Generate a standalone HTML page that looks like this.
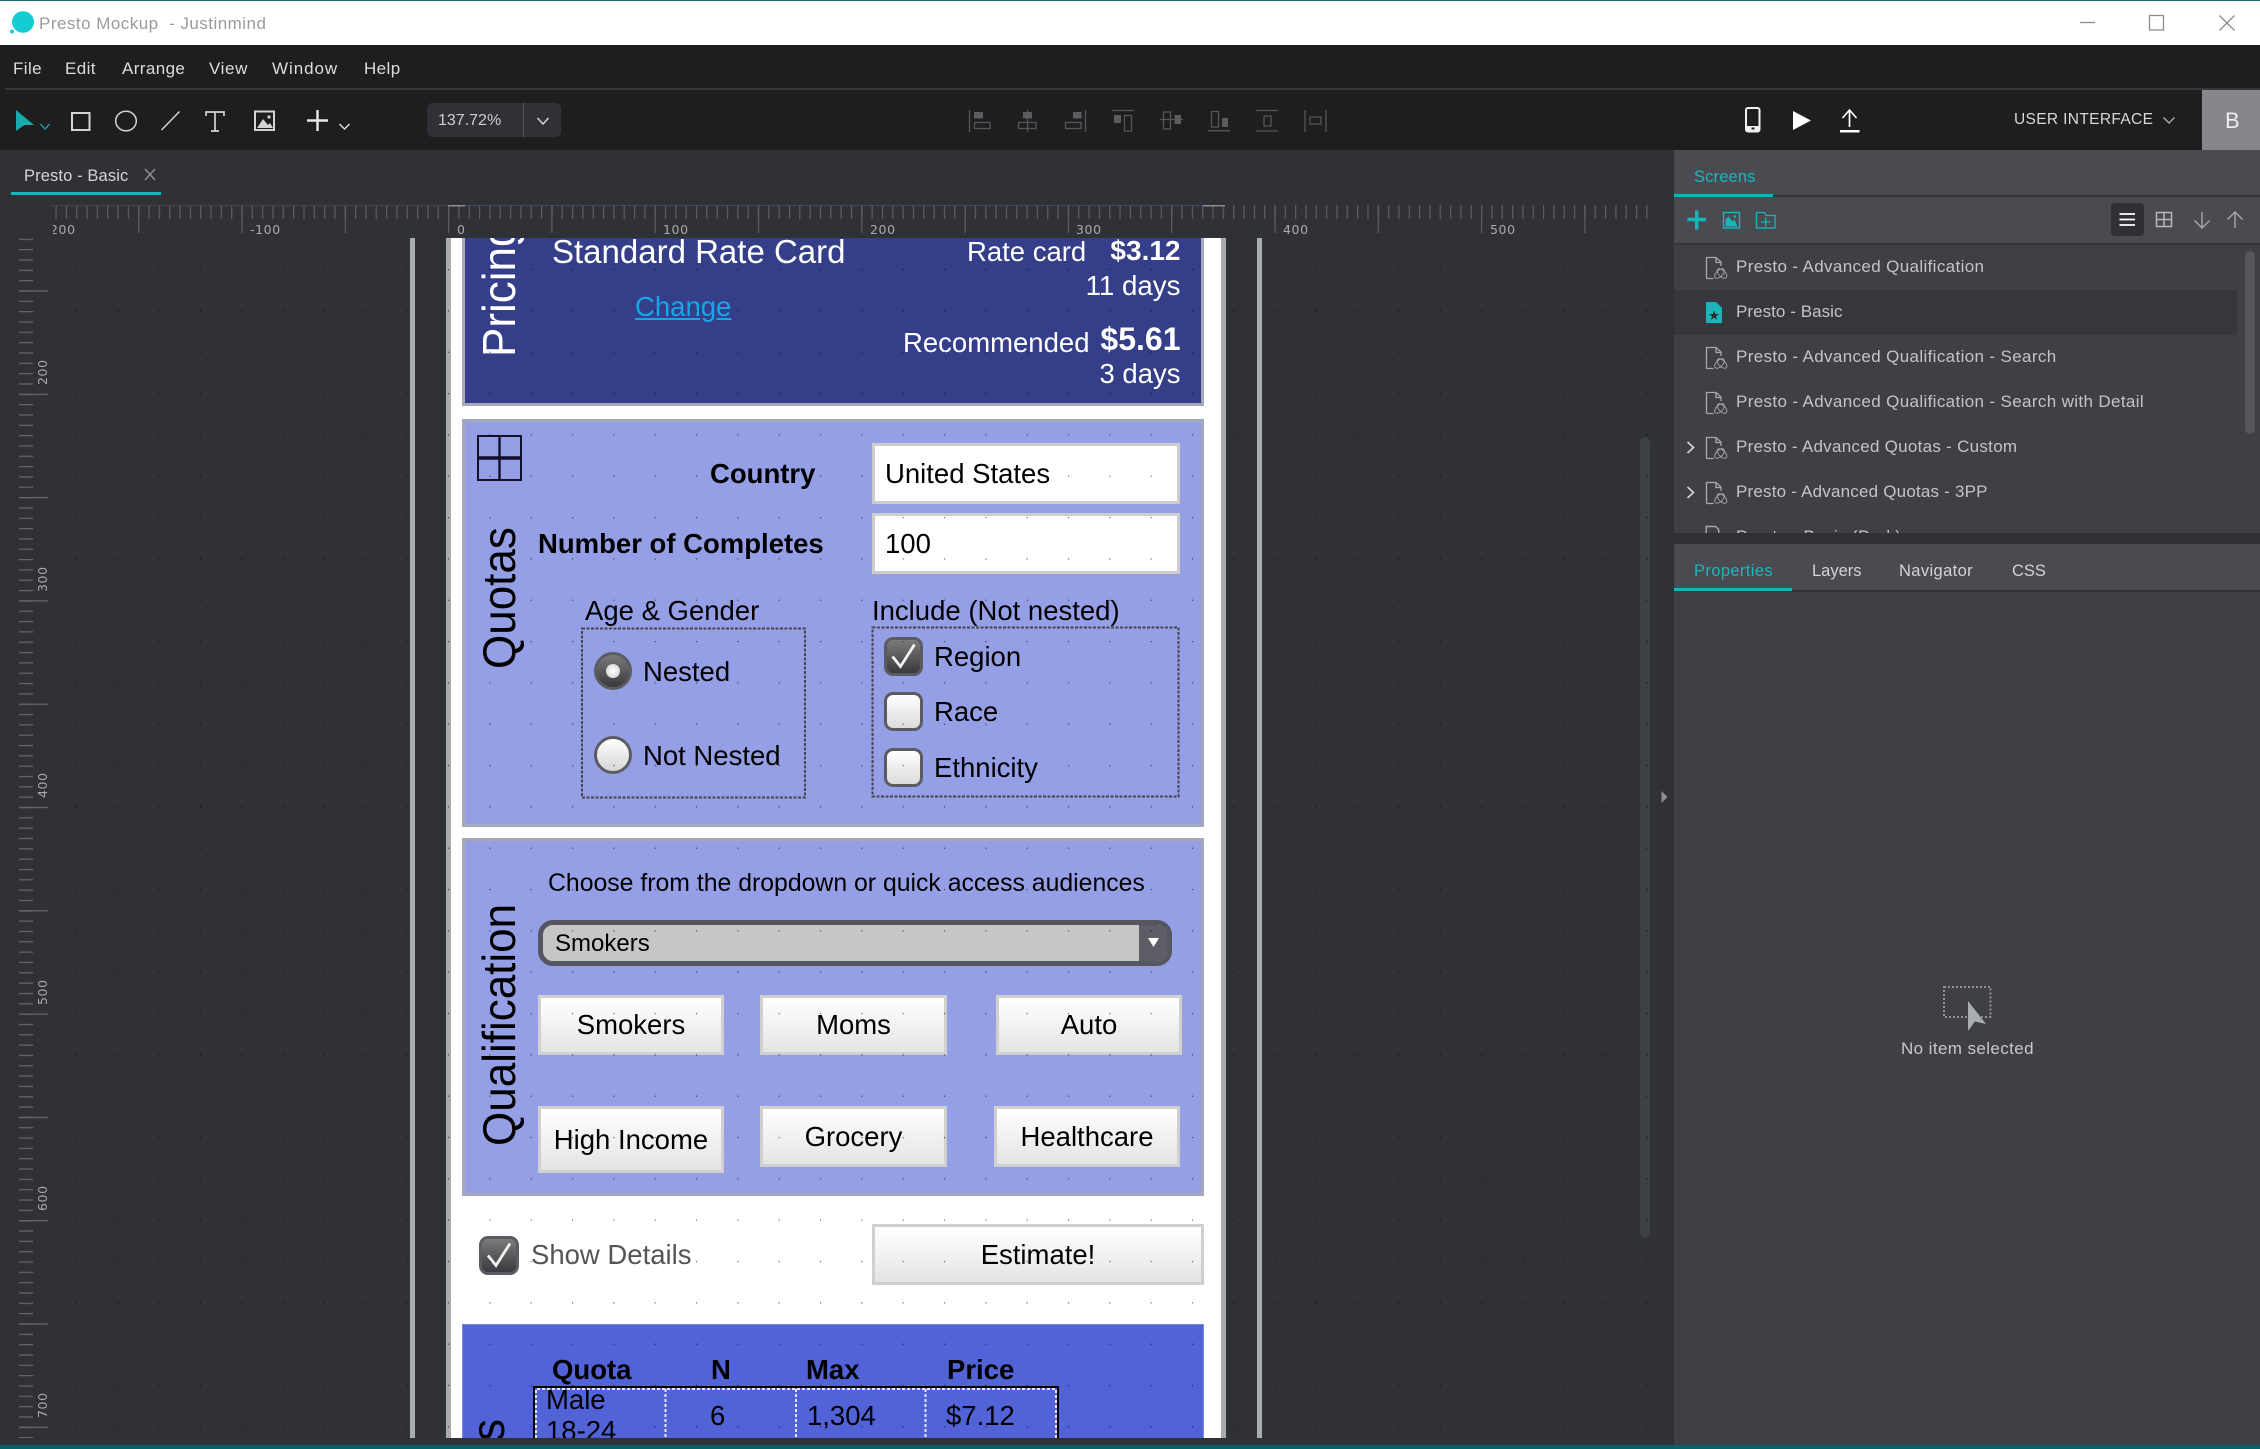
<!DOCTYPE html>
<html><head><meta charset="utf-8"><title>Presto Mockup - Justinmind</title>
<style>
html,body{margin:0;padding:0;background:#303136;width:2260px;height:1449px;overflow:hidden;}
body{position:relative;font-family:"Liberation Sans",sans-serif;}
#root{position:absolute;left:0;top:0;width:2260px;height:1449px;overflow:hidden;}
div,span{box-sizing:border-box;}
.a{position:absolute;}
.t{position:absolute;white-space:nowrap;line-height:1;}
.m{font-size:17px;color:#dcdcdc;top:60px;letter-spacing:.4px;}
.r{font-size:17px;color:#c4c4c4;letter-spacing:.36px;}
.tb{font-size:16.5px;letter-spacing:.38px;}
.ru{color:#a8a9ac;top:224px;letter-spacing:.6px;font-family:"DejaVu Sans",sans-serif;font-size:12.5px;}
.rv{font-size:12.5px;color:#a8a9ac;left:37px;transform-origin:0 0;transform:rotate(-90deg);letter-spacing:.6px;font-family:"DejaVu Sans",sans-serif;}
.p{font-size:27.5px;color:#000;}
.w{color:#fff;}
.b{font-weight:bold;}
.v{font-size:44px;transform-origin:0 0;transform:rotate(-90deg) scaleY(1.05);}
.btn{position:absolute;border:3px solid #d0d0d0;background:linear-gradient(#fff,#e4e4e4);text-align:center;font-size:27.5px;color:#000;white-space:nowrap;}
.inp{position:absolute;left:872px;width:308px;height:61px;background:#fff;border:3px solid #cdcdcd;}
.panel{position:absolute;left:462px;width:742px;border:3px solid #a5a8b8;}
.rad{position:absolute;left:594px;width:38px;height:38px;border-radius:50%;border:3px solid #5b5c62;background:linear-gradient(#fff,#d6d6d6);}
.chk{position:absolute;left:884px;width:39px;height:39px;border-radius:9px;border:3px solid #5b5c62;background:linear-gradient(#fff,#dcdcdc);}
.dark{background:linear-gradient(#7a7a7a,#3a3a3e);}
.g{position:absolute;top:238px;height:1200px;background:#a9acad;}
</style></head>
<body>
<div id="root">
<!-- Title bar -->
<div class="a" style="left:0;top:0;width:2260px;height:45px;background:#fff;"></div>
<div class="a" style="left:0;top:0;width:2260px;height:1px;background:#1f6f79;"></div>
<span class="t" style="left:39px;top:15px;font-size:17px;color:#9b9b9b;letter-spacing:.48px;white-space:pre;">Presto Mockup  - Justinmind</span>
<!-- Menu -->
<div class="a" style="left:0;top:45px;width:2260px;height:105px;background:#1e1e1e;"></div>
<div class="a" style="left:5px;top:88px;width:2255px;height:2px;background:#38383a;"></div>
<span class="t m" style="left:13px;">File</span><span class="t m" style="left:65px;">Edit</span><span class="t m" style="left:122px;">Arrange</span><span class="t m" style="left:209px;letter-spacing:.6px;">View</span><span class="t m" style="left:272px;letter-spacing:.95px;">Window</span><span class="t m" style="left:364px;">Help</span>
<!-- zoom box -->
<div class="a" style="left:427px;top:103px;width:134px;height:34px;background:#303136;border-radius:5px;"></div>
<div class="a" style="left:523px;top:103px;width:1px;height:34px;background:#55565a;"></div>
<span class="t" style="left:438px;top:113px;font-size:16px;color:#cfcfcf;">137.72%</span>
<span class="t" style="left:2014px;top:112px;font-size:15.5px;color:#d8d8d8;letter-spacing:.35px;">USER INTERFACE</span>
<div class="a" style="left:2202px;top:90px;width:58px;height:60px;background:#85878a;"></div>
<span class="t" style="left:2225px;top:110px;font-size:22px;color:#eee;">B</span>
<!-- tab -->
<span class="t" style="left:24px;top:168px;font-size:16.5px;color:#d4d4d4;letter-spacing:.12px;">Presto - Basic</span>
<div class="a" style="left:11px;top:192px;width:150px;height:3px;background:#14b5b9;"></div>

<!-- Right panel -->
<div class="a" style="left:1674px;top:150px;width:586px;height:47px;background:#4a4b50;"></div>
<div class="a" style="left:1674px;top:195px;width:586px;height:2px;background:#333438;"></div>
<div class="a" style="left:1674px;top:194px;width:99px;height:3px;background:#14b5b9;"></div>
<span class="t tb" style="left:1694px;top:169px;color:#1ab6ba;letter-spacing:.15px;">Screens</span>
<div class="a" style="left:1674px;top:197px;width:586px;height:46px;background:#4a4b50;"></div>
<div class="a" style="left:1674px;top:243px;width:586px;height:2px;background:#333438;"></div>
<div class="a" style="left:2111px;top:203px;width:33px;height:33px;background:#2f3034;border-radius:4px;"></div>
<div class="a" style="left:1674px;top:245px;width:586px;height:288px;background:#3f4045;overflow:hidden;">
  <div class="a" style="left:0;top:45px;width:563px;height:45px;background:#36373c;"></div>
  <div class="a" style="left:571px;top:6px;width:10px;height:183px;background:#55575b;border-radius:5px;"></div>
</div>
<div class="a" style="left:1674px;top:245px;width:586px;height:288px;overflow:hidden;">
  <span class="t r" style="left:62px;top:13px;">Presto - Advanced Qualification</span>
  <span class="t r" style="left:62px;top:58px;letter-spacing:.05px;">Presto - Basic</span>
  <span class="t r" style="left:62px;top:103px;">Presto - Advanced Qualification - Search</span>
  <span class="t r" style="left:62px;top:148px;">Presto - Advanced Qualification - Search with Detail</span>
  <span class="t r" style="left:62px;top:193px;letter-spacing:.28px;">Presto - Advanced Quotas - Custom</span>
  <span class="t r" style="left:62px;top:238px;letter-spacing:.2px;">Presto - Advanced Quotas - 3PP</span>
  <span class="t r" style="left:62px;top:283px;">Presto - Basic (Dark)</span>
</div>
<div class="a" style="left:1674px;top:533px;width:586px;height:11px;background:#303136;"></div>
<div class="a" style="left:1674px;top:544px;width:586px;height:46px;background:#4a4b50;"></div>
<div class="a" style="left:1674px;top:590px;width:586px;height:2px;background:#333438;"></div>
<div class="a" style="left:1674px;top:588px;width:118px;height:3px;background:#14b5b9;"></div>
<span class="t tb" style="left:1694px;top:563px;color:#1ab6ba;">Properties</span>
<span class="t tb" style="left:1812px;top:563px;color:#d4d4d4;letter-spacing:0;">Layers</span>
<span class="t tb" style="left:1899px;top:563px;color:#d4d4d4;">Navigator</span>
<span class="t tb" style="left:2012px;top:563px;color:#d4d4d4;letter-spacing:0;">CSS</span>
<div class="a" style="left:1674px;top:592px;width:586px;height:853px;background:#3f4045;"></div>
<span class="t" style="left:1901px;top:1040px;font-size:17px;color:#c8c8c8;letter-spacing:.4px;">No item selected</span>

<!-- Canvas clip -->
<div class="a" style="left:0;top:0;width:1674px;height:1449px;overflow:hidden;clip-path:polygon(50px 238px,1674px 238px,1674px 1438px,50px 1438px);">
  <div class="g" style="left:410px;width:5px;"></div>
  <div class="g" style="left:446px;width:5px;"></div>
  <div class="g" style="left:1221px;width:5px;"></div>
  <div class="g" style="left:1257px;width:5px;"></div>
  <div class="a" style="left:451px;top:238px;width:770px;height:1200px;background:#fff;"></div>

  <!-- Pricing -->
  <div class="panel" style="top:200px;height:206px;background:#353e88;"></div>
  <span class="t v w" style="left:477px;top:357px;">Pricing</span>
  <span class="t w" style="left:552px;top:235px;font-size:33px;">Standard Rate Card</span>
  <span class="t" style="left:635px;top:293px;font-size:27.5px;color:#17a7e8;text-decoration:underline;">Change</span>
  <span class="t w" style="left:967px;top:238px;font-size:27.5px;">Rate card</span>
  <span class="t w b" style="right:493.5px;top:237px;font-size:28px;">$3.12</span>
  <span class="t w" style="right:493.5px;top:272px;font-size:27.7px;">11 days</span>
  <span class="t w" style="left:903px;top:329px;font-size:27.5px;">Recommended</span>
  <span class="t w b" style="right:493.5px;top:323px;font-size:32px;">$5.61</span>
  <span class="t w" style="right:493.5px;top:360px;font-size:27.5px;">3 days</span>

  <!-- Quotas -->
  <div class="panel" style="top:419px;height:408px;background:#959fe5;"></div>
  <span class="t v" style="left:477px;top:669px;">Quotas</span>
  <span class="t p b" style="left:710px;top:460px;">Country</span>
  <span class="t p b" style="left:538px;top:530px;">Number of Completes</span>
  <div class="inp" style="top:443px;"></div>
  <div class="inp" style="top:513px;"></div>
  <span class="t p" style="left:885px;top:460px;">United States</span>
  <span class="t p" style="left:885px;top:530px;">100</span>
  <span class="t p" style="left:585px;top:597px;">Age &amp; Gender</span>
  <span class="t p" style="left:872px;top:597px;">Include (Not nested)</span>
  <div class="rad dark" style="top:652px;"></div>
  <div class="a" style="left:606px;top:664px;width:14px;height:14px;border-radius:50%;background:radial-gradient(#fff,#ccc);"></div>
  <div class="rad" style="top:736px;"></div>
  <span class="t p" style="left:643px;top:658px;">Nested</span>
  <span class="t p" style="left:643px;top:742px;">Not Nested</span>
  <div class="chk dark" style="top:637px;"></div>
  <div class="chk" style="top:692px;"></div>
  <div class="chk" style="top:748px;"></div>
  <span class="t p" style="left:934px;top:643px;">Region</span>
  <span class="t p" style="left:934px;top:698px;">Race</span>
  <span class="t p" style="left:934px;top:754px;">Ethnicity</span>

  <!-- Qualification -->
  <div class="panel" style="top:838px;height:358px;background:#959fe5;"></div>
  <span class="t v" style="left:477px;top:1146px;">Qualification</span>
  <span class="t" style="left:548px;top:872px;font-size:24.8px;color:#000;">Choose from the dropdown or quick access audiences</span>
  <div class="a" style="left:538px;top:920px;width:634px;height:46px;background:#c6c6c6;border:5px solid #55565f;border-radius:15px;overflow:hidden;">
    <div class="a" style="right:0;top:0;width:28px;height:36px;background:#5c5d65;"></div>
  </div>
  <span class="t" style="left:555px;top:932px;font-size:24px;color:#000;">Smokers</span>
  <div class="btn" style="left:538px;top:995px;width:186px;height:60px;line-height:53px;">Smokers</div>
  <div class="btn" style="left:760px;top:995px;width:187px;height:60px;line-height:53px;">Moms</div>
  <div class="btn" style="left:996px;top:995px;width:186px;height:60px;line-height:53px;">Auto</div>
  <div class="btn" style="left:538px;top:1106px;width:186px;height:67px;line-height:61px;">High Income</div>
  <div class="btn" style="left:760px;top:1106px;width:187px;height:61px;line-height:55px;">Grocery</div>
  <div class="btn" style="left:994px;top:1106px;width:186px;height:61px;line-height:55px;">Healthcare</div>

  <!-- Show details -->
  <div class="chk dark" style="left:479px;top:1236px;width:40px;"></div>
  <span class="t" style="left:531px;top:1241px;font-size:27.5px;color:#555;">Show Details</span>
  <div class="btn" style="left:872px;top:1224px;width:332px;height:61px;line-height:55px;">Estimate!</div>

  <!-- Results -->
  <div class="a" style="left:462px;top:1324px;width:742px;height:114px;background:#5163d6;border:1px solid #7b8ae6;border-bottom:0;"></div>
  <span class="t v" style="left:466px;top:1441px;">s</span>
  <span class="t p b" style="left:552px;top:1356px;">Quota</span>
  <span class="t p b" style="left:711px;top:1356px;">N</span>
  <span class="t p b" style="left:806px;top:1356px;">Max</span>
  <span class="t p b" style="left:947px;top:1356px;">Price</span>
  <span class="t p" style="left:546px;top:1386px;">Male</span>
  <span class="t p" style="left:546px;top:1417px;">18-24</span>
  <span class="t p" style="left:710px;top:1402px;">6</span>
  <span class="t p" style="left:807px;top:1402px;">1,304</span>
  <span class="t p" style="left:946px;top:1402px;">$7.12</span>

  <!-- canvas scrollbar and dots -->
  <div class="a" style="left:1640px;top:437px;width:10px;height:801px;background:#3d4044;border-radius:5px;"></div>
  <svg class="a" style="left:0;top:0;" width="1674" height="1449">
    <defs><pattern id="d" x="76" y="269" width="41.33" height="41.33" patternUnits="userSpaceOnUse"><rect x="0" y="0" width="1.2" height="1.2" fill="#000" opacity=".6"/></pattern></defs>
    <rect x="60" y="238" width="1600" height="1200" fill="url(#d)"/>
    <!-- dashed groups -->
    <rect x="582" y="628.500" width="223" height="169" fill="none" stroke="#45464f" stroke-width="2" stroke-dasharray="3 1.500"/>
    <rect x="872.500" y="627.500" width="306" height="169" fill="none" stroke="#45464f" stroke-width="2" stroke-dasharray="3 1.500"/>
    <!-- results table -->
    <path d="M534 1438V1387H1058V1438" fill="none" stroke="#000" stroke-width="2"/>
    <g fill="none" stroke="#e6e6f0" stroke-width="2" stroke-dasharray="3 2">
      <path d="M536 1438V1389H1056V1438"/>
      <path d="M665.500 1389v49M796 1389v49M925.500 1389v49"/>
    </g>
    <!-- check marks and dropdown arrow -->
    <path d="M892.500 656.500l8 10 14-22" fill="none" stroke="#f2f2f2" stroke-width="2.800"/>
    <path d="M488 1255.500l8 10 14-22" fill="none" stroke="#f2f2f2" stroke-width="2.800"/>
    <path d="M1148 938h11l-5.500 9z" fill="#fff"/>
    <!-- grid icon -->
    <g fill="none" stroke="#101028" stroke-width="2"><rect x="478" y="436" width="43" height="44"/><path d="M499.500 436v44" stroke-width="2.400"/><path d="M478 458h43" stroke-width="3.400"/></g>
  </svg>
</div>

<!-- rulers and icons -->
<svg class="a" style="left:0;top:0;pointer-events:none;" width="2260" height="1449">
  <defs>
    <pattern id="hs" x="448" y="205" width="10.33" height="14" patternUnits="userSpaceOnUse"><rect width="1.2" height="14" fill="#5c5d61"/></pattern>
    <pattern id="hb" x="448" y="205" width="103.3" height="28" patternUnits="userSpaceOnUse"><rect width="1.2" height="28" fill="#5c5d61"/></pattern>
    <pattern id="vs" x="19" y="393.7" width="14" height="10.33" patternUnits="userSpaceOnUse"><rect width="14" height="1.2" fill="#66676b"/></pattern>
    <pattern id="vb" x="19" y="393.7" width="29" height="103.3" patternUnits="userSpaceOnUse"><rect width="29" height="1.2" fill="#66676b"/></pattern>
    <symbol id="doc" viewBox="0 0 22 24" width="22" height="24">
      <path d="M1 22.500V1.500H10.500L15.500 6V10M1 22.500H8M10.500 1.500V6.500H15.500" fill="none" stroke="#a9a9a9" stroke-width="1.300"/>
      <ellipse cx="14" cy="17.500" rx="6" ry="3.200" transform="rotate(-45 14 17.500)" fill="none" stroke="#a9a9a9" stroke-width=".9"/>
      <ellipse cx="16.500" cy="17.500" rx="6" ry="3.200" transform="rotate(45 16.500 17.500)" fill="none" stroke="#a9a9a9" stroke-width=".9"/>
    </symbol>
  </defs>
  <rect x="51" y="205" width="1600" height="14" fill="url(#hs)"/>
  <rect x="51" y="205" width="1600" height="28" fill="url(#hb)"/>
  <rect x="448" y="205" width="755" height="1" fill="#3b4a6b"/>
  <rect x="51" y="205" width="397" height="1" fill="#44454a"/>
  <rect x="448" y="205" width="17" height="1.500" fill="#8a8b8e"/><rect x="1203" y="205" width="22" height="1.500" fill="#8a8b8e"/>
  <rect x="19" y="238" width="14" height="1200" fill="url(#vs)"/>
  <rect x="19" y="238" width="29" height="1200" fill="url(#vb)"/>

  <!-- logo -->
  <ellipse cx="23" cy="22" rx="11" ry="10.800" fill="#13cdd2"/><circle cx="12" cy="31.500" r="2" fill="#13cdd2"/>
  <!-- window -->
  <g fill="none" stroke="#8d8d8d" stroke-width="1.300"><path d="M2080 22.500h15"/><rect x="2149.500" y="15.500" width="14" height="14.500"/><path d="M2219.500 15.500l15 15M2234.500 15.500l-15 15"/></g>
  <!-- toolbar -->
  <path d="M16 110L34 125H24.500L16 131Z" fill="#1aa9ad"/>
  <path d="M40.500 124l4.500 5 4.500-5" fill="none" stroke="#1aa9ad" stroke-width="1.300"/>
  <rect x="72" y="113" width="17.500" height="17" fill="none" stroke="#d4d4d4" stroke-width="2"/>
  <ellipse cx="126" cy="121" rx="10.300" ry="9.800" fill="none" stroke="#d4d4d4" stroke-width="1.500"/>
  <path d="M161.500 130L179.500 111.500" stroke="#d4d4d4" stroke-width="1.500"/>
  <path d="M206 116v-4h18v4M215 112v19M211 131h8" fill="none" stroke="#d4d4d4" stroke-width="1.700"/>
  <rect x="255" y="111.500" width="19" height="18.500" fill="none" stroke="#d4d4d4" stroke-width="2"/>
  <path d="M257 128l6-9 5 6 2-2 3 5z" fill="#d4d4d4"/><circle cx="269" cy="117" r="1.600" fill="#d4d4d4"/>
  <path d="M307 120.500h21M317.500 110v21" stroke="#e8e8e8" stroke-width="2.400"/>
  <path d="M339.500 124l5 5 5-5" fill="none" stroke="#e0e0e0" stroke-width="1.400"/>
  <path d="M537.500 118l5.500 6 5.500-6" fill="none" stroke="#d0d0d0" stroke-width="1.600"/>
  <!-- align -->
  <g fill="none" stroke="#55565a" stroke-width="1.300">
    <path d="M969.500 110v22"/><rect x="974.500" y="122.500" width="15.500" height="6"/>
    <path d="M1027.500 110v22"/><rect x="1018.500" y="122.500" width="17.500" height="6"/>
    <path d="M1085.500 110v22"/><rect x="1065.500" y="122.500" width="15.500" height="6"/>
    <path d="M1112 110.500h22"/><rect x="1124.500" y="115.500" width="7" height="15.500"/>
    <path d="M1160 119.500h23"/><rect x="1163.500" y="112" width="7" height="17"/>
    <path d="M1208 130.700h22"/><rect x="1211.500" y="111.500" width="7" height="15.500"/>
    <path d="M1256 110.500h22M1256 131h22"/><rect x="1264" y="116" width="7" height="10"/>
    <path d="M1305 110v22M1326 110v22"/><rect x="1310" y="117" width="11" height="7"/>
  </g>
  <g fill="#5b5c60">
    <rect x="974" y="112" width="9" height="6.500"/><rect x="1023" y="112" width="9" height="6.500"/><rect x="1073" y="112" width="8.500" height="6.500"/>
    <rect x="1114" y="115" width="7" height="8"/><rect x="1174.500" y="115" width="6.500" height="9"/><rect x="1222" y="118" width="6" height="9"/>
  </g>
  <!-- phone play upload -->
  <rect x="1746" y="108" width="13.500" height="23.500" rx="2" fill="none" stroke="#f0f0f0" stroke-width="2"/>
  <rect x="1746" y="126" width="13.500" height="5.500" fill="#f0f0f0"/><rect x="1751.500" y="127.500" width="3" height="2" fill="#1e1e1e"/>
  <path d="M1793 111L1811 120.500L1793 130Z" fill="#fff"/>
  <path d="M1849.500 127V110.500M1842.500 118l7-8 7 8" fill="none" stroke="#fff" stroke-width="1.700"/><rect x="1840" y="130" width="19.500" height="2.500" fill="#fff"/>
  <path d="M2163.500 117.500l5.500 5.500 5.500-5.500" fill="none" stroke="#aaa" stroke-width="1.400"/>
  <!-- tab x -->
  <path d="M145 169l10 11M155 169l-10 11" stroke="#8a8b8e" stroke-width="1.600"/>
  <!-- screens toolbar -->
  <path d="M1687.500 219.500h18.500M1696.700 210.500v19" stroke="#17b6ba" stroke-width="3.400"/>
  <rect x="1723.500" y="212.500" width="16" height="15.500" fill="none" stroke="#17b6ba" stroke-width="1.400"/>
  <path d="M1725.500 226.500v-7l3-3 4 5 2-2 3 7z" fill="#17b6ba"/><circle cx="1735" cy="216.500" r="1.300" fill="#17b6ba"/>
  <path d="M1756.500 228V212.500H1764.500L1766.500 215.500H1775V228Z" fill="none" stroke="#17b6ba" stroke-width="1.300"/>
  <path d="M1761 222h9.500M1765.700 217.500v9" stroke="#17b6ba" stroke-width="1.300"/>
  <path d="M2119.500 214h15.500M2119.500 219.500h15.500M2119.500 225h15.500" stroke="#fff" stroke-width="1.800"/>
  <g fill="none" stroke="#b8b8b8" stroke-width="1.500"><rect x="2156.500" y="212.500" width="15" height="14"/><path d="M2164 212.500v14M2156.500 219.500h15"/></g>
  <path d="M2202 212v16M2194.500 220.500l7.500 7.500 7.500-7.500" fill="none" stroke="#a8a8a8" stroke-width="1.400"/>
  <path d="M2235 228v-16M2227.500 219.500l7.500-7.500 7.500 7.500" fill="none" stroke="#a8a8a8" stroke-width="1.400"/>
  <!-- list icons -->
  <use href="#doc" x="1705.500" y="256"/>
  <path d="M1706 302H1716L1722 308V323H1706Z" fill="#17b6ba"/>
  <path d="M1714 310.500l1.300 3.500h3.700l-3 2.200 1.100 3.600-3.100-2.200-3.100 2.200 1.100-3.600-3-2.200h3.700z" fill="#2a2b30"/>
  <use href="#doc" x="1705.500" y="346"/>
  <use href="#doc" x="1705.500" y="391"/>
  <use href="#doc" x="1705.500" y="436"/>
  <use href="#doc" x="1705.500" y="481"/>
  <path d="M1687.500 442l6 5.500-6 5.500M1687.500 487l6 5.500-6 5.500" fill="none" stroke="#d8d8d8" stroke-width="1.600"/>
  <path d="M1706.200 533v-6.500h9.500l3 3V533" fill="none" stroke="#a9a9a9" stroke-width="1.400"/>
  <!-- collapse handle -->
  <path d="M1661.500 791l6 6-6 6z" fill="#8d8e91"/>
  <!-- no item -->
  <rect x="1944" y="987" width="46.500" height="30" fill="none" stroke="#8f9092" stroke-width="2" stroke-dasharray="2 2"/>
  <path d="M1968 1001L1986 1024L1975 1021.500L1968 1031Z" fill="#a9afaf"/>
</svg>
<div class="a" style="left:1674px;top:533px;width:586px;height:2px;background:#303136;"></div>

<!-- ruler labels -->
<span class="t ru" style="left:50px;clip-path:inset(0 0 0 3px);">200</span>
<span class="t ru" style="left:250px;">-100</span>
<span class="t ru" style="left:457px;">0</span>
<span class="t ru" style="left:663px;">100</span>
<span class="t ru" style="left:870px;">200</span>
<span class="t ru" style="left:1076px;">300</span>
<span class="t ru" style="left:1283px;">400</span>
<span class="t ru" style="left:1490px;">500</span>
<span class="t rv" style="top:385px;">200</span>
<span class="t rv" style="top:592px;">300</span>
<span class="t rv" style="top:798px;">400</span>
<span class="t rv" style="top:1005px;">500</span>
<span class="t rv" style="top:1211px;">600</span>
<span class="t rv" style="top:1418px;">700</span>

<!-- bottom bar -->
<div class="a" style="left:0;top:1445px;width:2260px;height:4px;background:#05606c;"></div>
</div>
</body></html>
